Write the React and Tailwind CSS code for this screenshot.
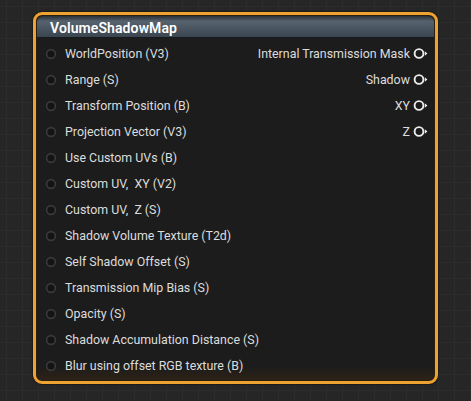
import React from 'react';

const inputs = [
  'WorldPosition (V3)',
  'Range (S)',
  'Transform Position (B)',
  'Projection Vector (V3)',
  'Use Custom UVs (B)',
  'Custom UV,  XY (V2)',
  'Custom UV,  Z (S)',
  'Shadow Volume Texture (T2d)',
  'Self Shadow Offset (S)',
  'Transmission Mip Bias (S)',
  'Opacity (S)',
  'Shadow Accumulation Distance (S)',
  'Blur using offset RGB texture (B)',
];

const outputs = ['Internal Transmission Mask', 'Shadow', 'XY', 'Z'];

const InPin = () => (
  <svg width="12" height="12" viewBox="0 0 12 12" className="shrink-0">
    <circle cx="6" cy="6" r="4.4" fill="#141414" stroke="#3a3a3a" strokeWidth="1.6" />
  </svg>
);

const OutPin = () => (
  <svg width="15" height="13" viewBox="0 0 15 13" className="shrink-0">
    <circle cx="6" cy="6.5" r="4.4" fill="#1b1b1b" stroke="#ececec" strokeWidth="1.9" />
    <path d="M11.8 4.2 L14.4 6.5 L11.8 8.8 Z" fill="#ececec" />
  </svg>
);

export default function App() {
  return (
    <div
      className="w-[471px] h-[401px] overflow-hidden bg-[#262626] pt-[12px] pl-[33px]"
      style={{
        backgroundImage:
          'linear-gradient(to right, #2c2c2c 1px, transparent 1px), linear-gradient(to bottom, #2c2c2c 1px, transparent 1px)',
        backgroundSize: '16px 16px',
        backgroundPosition: '6px 6px',
        fontFamily: 'Roboto, "Liberation Sans", sans-serif',
      }}
    >
      <div className="w-[405px] h-[372px] rounded-[9px] border-[3px] border-[#eea232] bg-[#2a1e10] p-[1px] shadow-[0_0_2px_#000]">
        <div className="w-full h-full rounded-[6px] bg-[#1c1c1c] overflow-hidden flex flex-col">
          <div className="h-[22px] shrink-0 flex items-center pl-[13px] pt-[3px] bg-gradient-to-b from-[#2a3036] via-[#56636f] via-[25%] to-[#3a4550] border-b border-[#151a1f]">
            <span className="text-[14px] text-white font-semibold tracking-[0.1px]">VolumeShadowMap</span>
          </div>
          <div className="flex-1 pt-[3px] bg-gradient-to-b from-[#1c1c1c] from-[96%] to-[#2e2216]">
            <div className="flex flex-col">
              {inputs.map((label, i) => (
                <div key={label} className="h-[26px] flex items-center pl-[8px] pr-[6px]">
                  <InPin />
                  <span className="ml-[8px] text-[12.4px] text-[#dcdcdc] whitespace-pre">{label}</span>
                  <div className="flex-1" />
                  {outputs[i] && (
                    <div className="flex items-center gap-[3px]">
                      <span className="text-[12.4px] text-[#dcdcdc]">{outputs[i]}</span>
                      <OutPin />
                    </div>
                  )}
                </div>
              ))}
            </div>
          </div>
        </div>
      </div>
    </div>
  );
}
